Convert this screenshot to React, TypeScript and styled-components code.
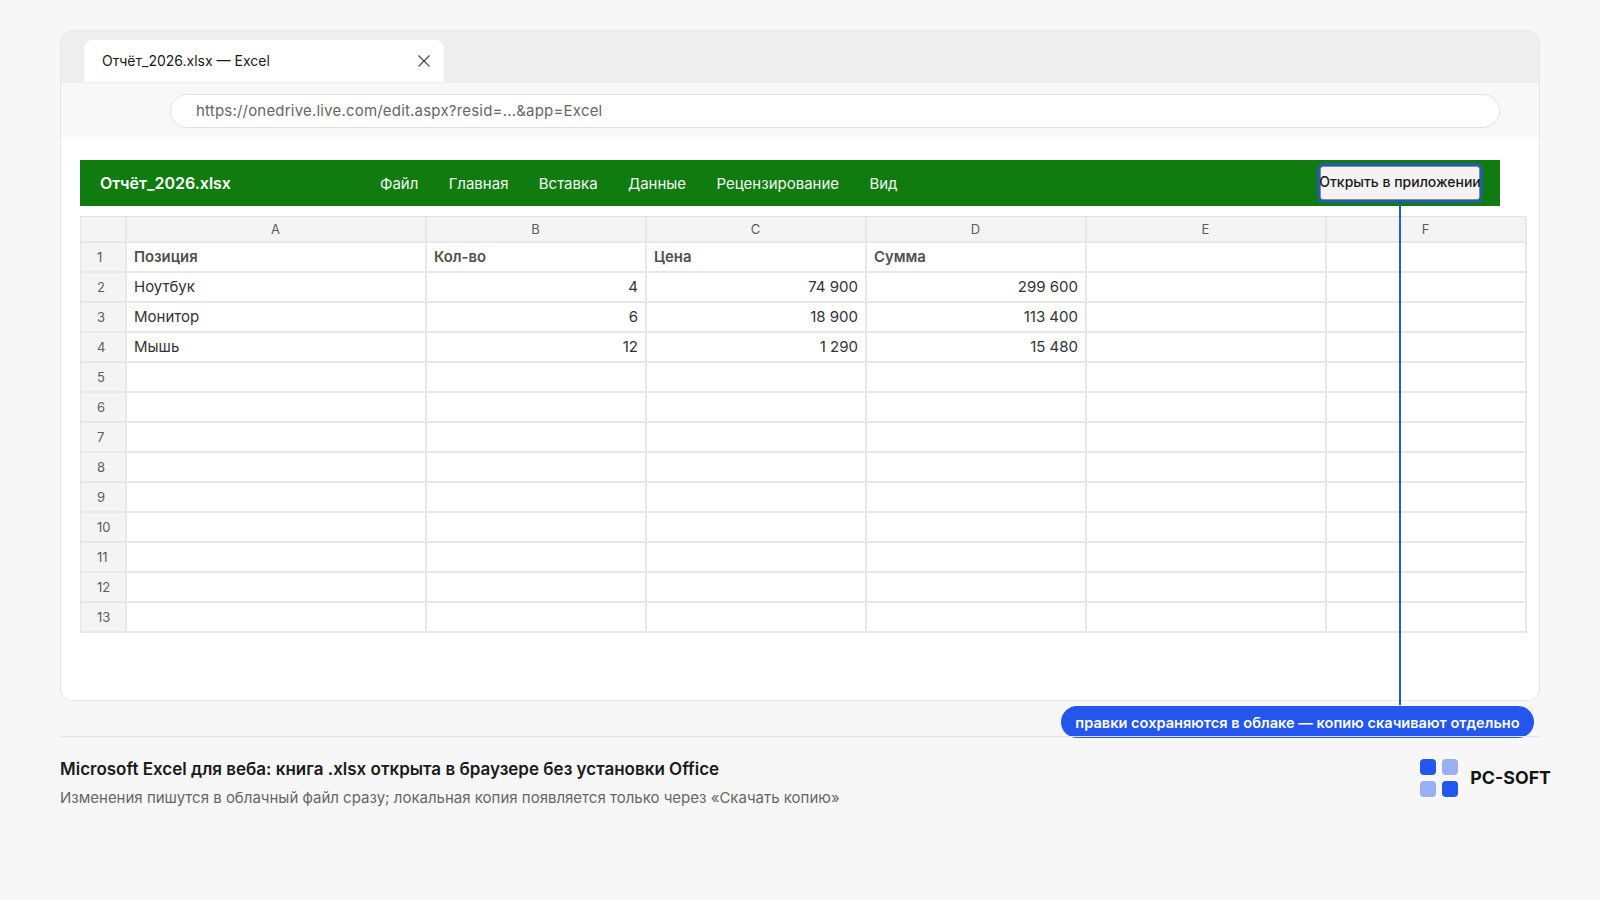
import React from "react";
import styled, { createGlobalStyle } from "styled-components";

const GlobalStyle = createGlobalStyle`
  html, body {
    margin: 0;
    padding: 0;
    height: 100%;
    background: #f7f7f7;
    font-family: Inter, "Noto Sans", sans-serif;
  }
  * { box-sizing: border-box; }
`;

const Page = styled.div`
  position: relative;
  width: 1600px;
  height: 900px;
  padding: 30px 60px 0;
  overflow: hidden;
`;

const Window = styled.div`
  height: 671px;
  background: #fff;
  border: 1px solid #e6e6e6;
  border-radius: 12px;
  overflow: hidden;
`;

const TabStrip = styled.div`
  height: 52px;
  padding: 9px 0 0 23px;
  background: #eeeeee;
`;

const Tab = styled.div`
  width: 360px;
  height: 42px;
  padding: 0 13px 1px 18px;
  display: flex;
  align-items: center;
  justify-content: space-between;
  background: #fff;
  border-radius: 8px 8px 0 0;
  font-size: 14px;
  color: #1a1a1a;
`;

const AddressRow = styled.div`
  height: 54px;
  padding: 11px 39px 0 109px;
  background: #f8f8f8;
`;

const AddressBar = styled.div`
  height: 34px;
  padding: 0 25px 1px;
  display: flex;
  align-items: center;
  background: #fff;
  border: 1px solid #e2e2e2;
  border-radius: 17px;
  font-size: 15px;
  letter-spacing: 0.2px;
  color: #666;
`;

const Sheet = styled.div`
  padding: 23px 13px 0 19px;
`;

const Ribbon = styled.div`
  width: 1420px;
  height: 46px;
  padding: 0 20px;
  display: flex;
  align-items: center;
  background: #107c10;
  color: #fff;
`;

const FileName = styled.div`
  width: 280px;
  font-size: 16px;
  font-weight: 600;
`;

const Menu = styled.nav`
  display: flex;
  gap: 30.3px;
  flex: 1;
  font-size: 15px;
  color: #f2f7f2;
`;

const OpenButton = styled.button`
  width: 160px;
  height: 34px;
  padding: 0 0 3px;
  display: flex;
  align-items: center;
  justify-content: center;
  white-space: nowrap;
  background: #f3f3f3;
  border: 1px solid #8a8a8a;
  border-radius: 3px;
  outline: 3px solid #1f5fa8;
  outline-offset: 0;
  font-family: inherit;
  font-size: 14px;
  font-weight: 500;
  color: #1a1a1a;
`;

const Grid = styled.div`
  width: 1446px;
  margin-top: 10px;
  display: grid;
  grid-template-columns: 46px 300px 220px 220px 220px 240px 200px;
  grid-template-rows: 26px repeat(13, 30px);
  border-top: 1px solid #e4e4e4;
  border-left: 1px solid #e4e4e4;
`;

const Cell = styled.div<{ $align?: "left" | "right"; $bold?: boolean }>`
  display: flex;
  align-items: center;
  justify-content: ${(p) => (p.$align === "right" ? "flex-end" : "flex-start")};
  padding: 0 7px 1px;
  border-right: 2px solid #e8e8e8;
  border-bottom: 2px solid #e8e8e8;
  background: #fff;
  color: ${(p) => (p.$bold ? "#4f4f4f" : "#333")};
  font-size: ${(p) => (p.$bold ? "14.8px" : "15px")};
  font-weight: ${(p) => (p.$bold ? 600 : 400)};
`;

const ColumnHead = styled.div`
  display: flex;
  align-items: center;
  justify-content: center;
  padding: 0 8px 0 7px;
  border-right: 2px solid #e8e8e8;
  border-bottom: 2px solid #e8e8e8;
  background: #f4f4f4;
  color: #5c5c5c;
  font-size: 13px;
`;

const RowHead = styled(ColumnHead)`
  justify-content: flex-start;
  padding: 0 0 1px 16px;
`;

const Connector = styled.div`
  position: absolute;
  left: 1399px;
  top: 205px;
  width: 2px;
  height: 500px;
  background: #2456e6;
`;

const Callout = styled.div`
  position: absolute;
  left: 1061px;
  top: 706px;
  width: 473px;
  height: 32px;
  padding-top: 1px;
  display: flex;
  align-items: center;
  justify-content: center;
  background: #2456ee;
  border-radius: 16px;
  color: #fff;
  font-size: 14.6px;
  font-weight: 600;
  white-space: nowrap;
`;

const Footer = styled.footer`
  position: relative;
  z-index: 1;
  margin-top: 35px;
  padding-top: 22px;
  display: flex;
  justify-content: space-between;
  border-top: 1px solid #e4e4e4;
`;

const Title = styled.div`
  font-size: 17px;
  font-weight: 600;
  color: #1a1a1a;
`;

const Subtitle = styled.div`
  margin-top: 9px;
  font-size: 15px;
  color: #666;
`;

const Brand = styled.div`
  margin: 0 -11px 0 0;
  display: flex;
  align-items: center;
  align-self: flex-start;
  gap: 12px;
`;

const BrandName = styled.span`
  padding-bottom: 2px;
  font-size: 17.8px;
  font-weight: 700;
  color: #141414;
`;

const LogoGrid = styled.div`
  display: grid;
  grid-template-columns: 16px 16px;
  grid-template-rows: 16px 16px;
  gap: 6px;
`;

const LogoSquare = styled.div<{ $light?: boolean }>`
  border-radius: 4px;
  background: ${(p) => (p.$light ? "#99aff2" : "#2456ee")};
`;

const columns = ["", "A", "B", "C", "D", "E", "F"];

const rows: string[][] = [
  ["Позиция", "Кол-во", "Цена", "Сумма", "", ""],
  ["Ноутбук", "4", "74 900", "299 600", "", ""],
  ["Монитор", "6", "18 900", "113 400", "", ""],
  ["Мышь", "12", "1 290", "15 480", "", ""],
  ...Array.from({ length: 9 }, () => ["", "", "", "", "", ""]),
];

const menu = ["Файл", "Главная", "Вставка", "Данные", "Рецензирование", "Вид"];

const App = () => (
  <Page>
    <GlobalStyle />
    <Window>
      <TabStrip>
        <Tab>
          <span>Отчёт_2026.xlsx — Excel</span>
          <svg width="14" height="14" viewBox="0 0 14 14" fill="none" stroke="#444" strokeWidth="1.1">
            <path d="M1.5 1.5l11 11M12.5 1.5l-11 11" />
          </svg>
        </Tab>
      </TabStrip>
      <AddressRow>
        <AddressBar>https://onedrive.live.com/edit.aspx?resid=...&amp;app=Excel</AddressBar>
      </AddressRow>
      <Sheet>
        <Ribbon>
          <FileName>Отчёт_2026.xlsx</FileName>
          <Menu>
            {menu.map((item) => (
              <span key={item}>{item}</span>
            ))}
          </Menu>
          <OpenButton>Открыть в приложении</OpenButton>
        </Ribbon>
        <Grid>
          {columns.map((c, i) => (
            <ColumnHead key={i}>{c}</ColumnHead>
          ))}
          {rows.map((row, r) => (
            <React.Fragment key={r}>
              <RowHead>{r + 1}</RowHead>
              {row.map((value, c) => (
                <Cell key={c} $bold={r === 0} $align={r > 0 && c > 0 ? "right" : "left"}>
                  {value}
                </Cell>
              ))}
            </React.Fragment>
          ))}
        </Grid>
      </Sheet>
    </Window>
    <Footer>
      <div>
        <Title>Microsoft Excel для веба: книга .xlsx открыта в браузере без установки Office</Title>
        <Subtitle>
          Изменения пишутся в облачный файл сразу; локальная копия появляется только через «Скачать копию»
        </Subtitle>
      </div>
      <Brand>
        <LogoGrid>
          <LogoSquare />
          <LogoSquare $light />
          <LogoSquare $light />
          <LogoSquare />
        </LogoGrid>
        <BrandName>PC-SOFT</BrandName>
      </Brand>
    </Footer>
    <Connector />
    <Callout>правки сохраняются в облаке — копию скачивают отдельно</Callout>
  </Page>
);

export default App;
